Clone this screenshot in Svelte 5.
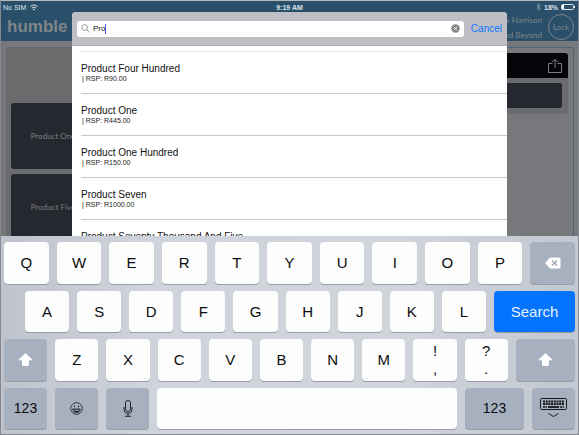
<script>
    let query = 'Pro'

    const products = [
        { name: 'Product Four Hundred', price: 'R90.00' },
        { name: 'Product One', price: 'R445.00' },
        { name: 'Product One Hundred', price: 'R150.00' },
        { name: 'Product Seven', price: 'R1000.00' },
        { name: 'Product Seventy Thousand And Five', price: '' }
    ]

    const tiles = ['Product One', 'Product Five']

    const topRow = 'QWERTYUIOP'.split('')
    const homeRow = 'ASDFGHJKL'.split('')
    const lowRow = 'ZXCVBNM'.split('')

    function type(letter) {
        query = query + letter.toLowerCase()
    }

    function erase() {
        query = query.slice(0, -1)
    }
</script>

<div class="screen">
    <div class="stage">
        <header>
            <div class="status">
                <span class="left">
                    No SIM
                    <svg width="8" height="7" viewBox="0 0 8 7" fill="none" stroke="#dfe6ea">
                        <path d="M0.5 2.6Q4 -0.6 7.5 2.6M1.9 4.1Q4 2.2 6.1 4.1" />
                        <path d="M4 6.6L2.9 5.2Q4 4.4 5.1 5.2Z" fill="#dfe6ea" stroke="none" />
                    </svg>
                </span>
                <span>9:19 AM</span>
                <span class="right">
                    <svg width="5" height="8" viewBox="0 0 5 8" fill="none" stroke="#7f9aab" stroke-width="0.8">
                        <path d="M0.5 2.2L4.3 5.6L2.5 7.4V0.6L4.3 2.4L0.5 5.8" />
                    </svg>
                    18%
                    <svg width="15" height="6" viewBox="0 0 15 6">
                        <rect x="0.5" y="0.5" width="12" height="5" rx="1" fill="none" stroke="#dfe6ea" />
                        <rect x="1" y="1" width="2" height="4" fill="#fff" />
                        <rect x="13" y="2" width="1" height="2" fill="#dfe6ea" />
                    </svg>
                </span>
            </div>
            <div class="brand">
                <strong>humble</strong>
                <div class="user">
                    <span>k Harrison</span>
                    <span>nd Beyond</span>
                </div>
                <button class="lock">Lock</button>
            </div>
        </header>

        <div class="page">
            <section class="catalog">
                {#each tiles as tile}
                    <button class="tile">{tile}</button>
                {/each}
            </section>
            <section class="order">
                <div class="orderCard">
                    <div class="orderBar">
                        <button class="share" aria-label="Share">
                            <svg width="16" height="16" viewBox="0 0 16 16" fill="none" stroke="#7b7d80">
                                <path d="M5.5 5.5H1.5V14.5H14.5V5.5H10.5M8 10V1.5M5 4.2L8 1.2L11 4.2" />
                            </svg>
                        </button>
                    </div>
                    <div class="orderLine"></div>
                </div>
            </section>
        </div>

        <div class="dialog">
            <div class="searchBar">
                <label class="field">
                    <svg width="9" height="9" viewBox="0 0 9 9" fill="none" stroke="#8a8a8f" stroke-width="0.9">
                        <circle cx="3.6" cy="3.6" r="2.9" />
                        <path d="M5.7 5.7L8.5 8.5" />
                    </svg>
                    <input type="text" aria-label="Search products" bind:value={query} />
                    <span class="caret"></span>
                    <button class="clear" aria-label="Clear" on:click={() => query = ''}>
                        <svg width="9" height="9" viewBox="0 0 9 9">
                            <circle cx="4.5" cy="4.5" r="4.2" fill="#838388" />
                            <path d="M2.8 2.8L6.2 6.2M6.2 2.8L2.8 6.2" stroke="#fff" stroke-width="0.9" />
                        </svg>
                    </button>
                </label>
                <button class="cancel">Cancel</button>
            </div>
            <ul>
                {#each products as product}
                    <li>
                        <span class="name">{product.name}</span>
                        {#if product.price}
                            <span class="price">| RSP: {product.price}</span>
                        {/if}
                    </li>
                {/each}
            </ul>
        </div>
    </div>

    <div class="keyboard">
        <div class="row">
            {#each topRow as letter}
                <button class="key" on:click={() => type(letter)}>{letter}</button>
            {/each}
            <button class="key dark" aria-label="Delete" on:click={erase}>
                <svg width="16" height="12" viewBox="0 0 16 12">
                    <path d="M5 0.5H14Q15.5 0.5 15.5 2V10Q15.5 11.5 14 11.5H5L0.5 6.6Q0 6 0.5 5.4Z" fill="#fff" />
                    <path d="M7 3.5L12 8.5M12 3.5L7 8.5" stroke="#99a3b3" stroke-width="1.2" />
                </svg>
            </button>
        </div>
        <div class="row home">
            {#each homeRow as letter}
                <button class="key" on:click={() => type(letter)}>{letter}</button>
            {/each}
            <button class="key search">Search</button>
        </div>
        <div class="row">
            <button class="key dark" aria-label="Shift">
                <svg width="15" height="13" viewBox="0 0 15 13" fill="#fff">
                    <path d="M7.5 0L15 7.3H11V11.5Q11 13 9.5 13H5.5Q4 13 4 11.5V7.3H0Z" />
                </svg>
            </button>
            {#each lowRow as letter}
                <button class="key" on:click={() => type(letter)}>{letter}</button>
            {/each}
            <button class="key double"><span>!</span><span>,</span></button>
            <button class="key double"><span>?</span><span>.</span></button>
            <button class="key dark wide" aria-label="Shift">
                <svg width="15" height="13" viewBox="0 0 15 13" fill="#fff">
                    <path d="M7.5 0L15 7.3H11V11.5Q11 13 9.5 13H5.5Q4 13 4 11.5V7.3H0Z" />
                </svg>
            </button>
        </div>
        <div class="row">
            <button class="key dark">123</button>
            <button class="key dark" aria-label="Emoji">
                <svg width="13" height="13" viewBox="0 0 13 13" fill="none" stroke="#22262c" stroke-width="0.9">
                    <circle cx="6.5" cy="6.5" r="5.8" />
                    <path d="M2.7 7H10.3Q9.8 10.6 6.5 10.6T2.7 7Z" fill="#22262c" />
                    <path d="M3.6 8.2H9.4" stroke="#c3c9d3" />
                    <ellipse cx="4.5" cy="4.4" rx="0.6" ry="0.9" fill="#22262c" stroke="none" />
                    <ellipse cx="8.5" cy="4.4" rx="0.6" ry="0.9" fill="#22262c" stroke="none" />
                </svg>
            </button>
            <button class="key dark" aria-label="Dictate">
                <svg width="10" height="17" viewBox="0 0 10 17" fill="none" stroke="#22262c">
                    <rect x="2.5" y="0.5" width="5" height="11" rx="2.5" />
                    <path d="M1 7V9.5Q1 13.5 5 13.5T9 9.5V7M5 13.5V16M2 16.3H8" />
                </svg>
            </button>
            <button class="key space" aria-label="Space" on:click={() => type(' ')}></button>
            <button class="key dark wide">123</button>
            <button class="key dark" aria-label="Hide keyboard">
                <svg width="27" height="20" viewBox="0 0 27 20" fill="none" stroke="#16191d">
                    <rect x="0.5" y="0.5" width="26" height="11" rx="1" />
                    <path d="M3 3.5H24M3 6H24" stroke-width="2" stroke-dasharray="2 0.7" />
                    <path d="M3 9H7M20 9H24" stroke-width="1.6" stroke-dasharray="2 0.5" />
                    <path d="M8 9H19" stroke-width="1.8" />
                    <path d="M8.5 15.5L13.5 18.5L18.5 15.5" />
                </svg>
            </button>
        </div>
    </div>
</div>

<style>
    :global(body) {
        background: #77787c;
    }

    button, input {
        margin: 0;
        padding: 0;
        border: none;
        background: none;
        font-family: inherit;
    }

    svg {
        display: block;
        flex: none;
    }

    .screen {
        display: flex;
        flex-direction: column;
        box-sizing: border-box;
        height: 100vh;
        border: 1px solid #85888e;
        border-top-color: #b5babb;
        font-family: "Liberation Sans", Arial, sans-serif;
    }

    .stage {
        position: relative;
        display: flex;
        flex-direction: column;
        flex: 1;
        min-height: 0;
        overflow: hidden;
        background: #77787c;
    }

    header {
        background: #294f6b;
    }

    .status {
        display: grid;
        grid-template-columns: 1fr auto 1fr;
        align-items: center;
        height: 12px;
        padding: 0 2px;
        font-size: 7px;
        font-weight: bold;
        color: #dfe6ea;
    }

    .left, .right {
        display: flex;
        align-items: center;
        gap: 4px;
    }

    .right {
        justify-content: flex-end;
        gap: 3px;
    }

    .left {
        font-weight: normal;
    }

    .brand {
        display: flex;
        align-items: center;
        gap: 6px;
        height: 28px;
        padding: 0 4px 0 6px;
        color: #7f8588;
    }

    strong {
        flex: 1;
        font-size: 17px;
    }

    .user {
        display: flex;
        flex-direction: column;
        align-items: flex-end;
        gap: 5px;
        font-family: Lato, sans-serif;
        font-size: 8px;
        line-height: 10px;
    }

    .lock {
        box-sizing: border-box;
        width: 26px;
        height: 26px;
        border: 1px solid #7f8588;
        border-radius: 50%;
        font-family: Lato, sans-serif;
        font-size: 8px;
        color: #7f8588;
    }

    .page {
        display: flex;
        flex: 1;
        gap: 6px;
        padding: 6px 4px 0 5px;
        min-height: 0;
    }

    .catalog {
        display: flex;
        flex: 1;
        flex-direction: column;
        gap: 5px;
        padding: 56px 5px 0;
        border-radius: 3px;
        background: #6a6b6d;
    }

    .tile {
        flex: none;
        width: 84px;
        height: 66px;
        border-radius: 3px;
        background: #25292f;
        font-family: Lato, sans-serif;
        font-size: 8px;
        color: #7b7e82;
    }

    .order {
        flex: 1;
        padding: 5px;
        border: 1px solid #4c6478;
        border-bottom: none;
        border-radius: 3px 3px 0 0;
    }

    .orderCard {
        padding-bottom: 6px;
        border-radius: 3px;
        background: #6a6b6d;
    }

    .orderBar {
        display: flex;
        align-items: center;
        justify-content: flex-end;
        height: 25px;
        padding-right: 5px;
        border-radius: 3px 3px 0 0;
        background: #040509;
    }

    .orderLine {
        height: 25px;
        margin: 5px 6px 0;
        border-radius: 2px;
        background: #25292f;
    }

    .dialog {
        position: absolute;
        top: 11px;
        right: 71px;
        bottom: 0;
        left: 71px;
        overflow: hidden;
        border-radius: 4px 4px 0 0;
        background: #fff;
    }

    .searchBar {
        display: flex;
        align-items: center;
        gap: 7px;
        height: 33px;
        padding: 0 5px;
        border-bottom: 1px solid #acacb1;
        background: #bfbec5;
    }

    .field {
        display: flex;
        flex: 1;
        align-items: center;
        height: 16px;
        padding: 0 4px;
        border-radius: 3px;
        background: #fff;
    }

    .field input {
        field-sizing: content;
        margin-left: 3px;
        outline: none;
        font-size: 8px;
        color: #111;
    }

    .caret {
        width: 1px;
        height: 10px;
        background: #3a5be0;
    }

    .clear {
        margin-left: auto;
    }

    .cancel {
        font-size: 10px;
        color: #0a74ff;
    }

    ul {
        margin: 5px 0 0 9px;
        padding: 0;
        list-style: none;
    }

    li {
        display: flex;
        flex-direction: column;
        box-sizing: border-box;
        height: 42px;
        padding-top: 11px;
        border-top: 1px solid #c8c8cb;
    }

    li:first-child {
        border-top-color: #e6e6e8;
    }

    .name {
        font-size: 10px;
        line-height: 12px;
        color: #111;
    }

    .price {
        padding-left: 1px;
        font-size: 7px;
        line-height: 8px;
        color: #222;
    }

    .keyboard {
        display: flex;
        flex: none;
        flex-direction: column;
        gap: 7px;
        box-sizing: border-box;
        height: 198px;
        padding: 6px 3px 5px;
        background: linear-gradient(90deg, #bec3cd, #cfd3db 25%, #d0d4db 70%, #c2c7d1);
    }

    .row {
        display: flex;
        flex: 1;
        gap: 8px;
    }

    .home {
        padding-left: 21px;
    }

    .key {
        display: flex;
        flex: 43 1 0;
        align-items: center;
        justify-content: center;
        min-width: 0;
        border-radius: 4px;
        background: #fdfdfe;
        box-shadow: 0 1px 0 #989ba2;
        font-size: 15px;
        color: #0c0c0d;
    }

    .dark {
        background: #a7b0bf;
        font-size: 14px;
    }

    .search {
        flex-grow: 79;
        background: #0374ff;
        color: #e8f2ff;
    }

    .wide {
        flex-grow: 59;
    }

    .space {
        flex-grow: 300;
    }

    .double {
        flex-direction: column;
        line-height: 18px;
    }
</style>
